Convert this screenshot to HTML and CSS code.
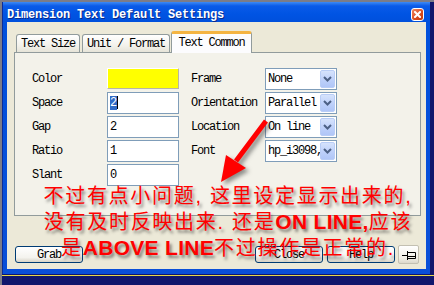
FILE: index.html
```html
<!DOCTYPE html>
<html lang="zh-CN">
<head>
<meta charset="UTF-8">
<title>Dimension Text Default Settings</title>
<link rel="stylesheet" href="styles.css">
</head>
<body>

<div class="desktop">
    <div class="window">
        <div class="titlebar">
            <span class="title">Dimension Text Default Settings</span>
            <span class="close-btn">
                <svg width="7" height="7" viewBox="0 0 7 7"><path d="M1 1L6 6M6 1L1 6" stroke="#fff" stroke-width="2" stroke-linecap="square"/></svg>
            </span>
        </div>
        <div class="client">
            <div class="tabs">
                <div class="tab tab-size">Text Size</div>
                <div class="tab tab-unit">Unit / Format</div>
                <div class="tab tab-active">Text Common</div>
            </div>
            <div class="panel">
                <div class="form-grid">
                    <span class="lbl">Color</span>
                    <span class="swatch"></span>
                    <span class="lbl">Frame</span>
                    <div class="combo"><span class="combo-text">None</span><span class="drop"><svg width="9" height="6" viewBox="0 0 9 6"><path d="M1 1L4.5 4.5L8 1" fill="none" stroke="#4d6185" stroke-width="2"/></svg></span></div>

                    <span class="lbl">Space</span>
                    <div class="field"><span class="sel">2</span><span class="caret"></span></div>
                    <span class="lbl">Orientation</span>
                    <div class="combo"><span class="combo-text">Parallel</span><span class="drop"><svg width="9" height="6" viewBox="0 0 9 6"><path d="M1 1L4.5 4.5L8 1" fill="none" stroke="#4d6185" stroke-width="2"/></svg></span></div>

                    <span class="lbl">Gap</span>
                    <div class="field">2</div>
                    <span class="lbl">Location</span>
                    <div class="combo"><span class="combo-text">On line</span><span class="drop"><svg width="9" height="6" viewBox="0 0 9 6"><path d="M1 1L4.5 4.5L8 1" fill="none" stroke="#4d6185" stroke-width="2"/></svg></span></div>

                    <span class="lbl">Ratio</span>
                    <div class="field">1</div>
                    <span class="lbl">Font</span>
                    <div class="combo"><span class="combo-text">hp_i3098,</span><span class="drop"><svg width="9" height="6" viewBox="0 0 9 6"><path d="M1 1L4.5 4.5L8 1" fill="none" stroke="#4d6185" stroke-width="2"/></svg></span></div>

                    <span class="lbl">Slant</span>
                    <div class="field">0</div>
                </div>
            </div>
            <div class="buttons">
                <button class="btn btn-grab">Grab</button>
                <span class="spacer"></span>
                <button class="btn">Close</button>
                <button class="btn">Help</button>
                <button class="pin">
                    <svg width="14" height="10" viewBox="0 0 14 10"><path d="M0 5.5H5M5.5 1V10M6 2.5H13.5V8.5H6M6 6.5H13" fill="none" stroke="#000" stroke-width="1"/></svg>
                </button>
            </div>
        </div>
    </div>
    <div class="yellow-line"></div>

    <svg class="arrow" width="60" height="75" viewBox="213 113 60 75">
        <path d="M266 121L236 161" stroke="#f00" stroke-width="5"/>
        <polygon points="221,182 226,155 246,168" fill="#f00"/>
    </svg>

    <div class="note">
        <div>不过有点小问题, 这里设定显示出来的,</div>
        <div>没有及时反映出来. 还是<b>ON LINE,</b>应该</div>
        <div>是<b>ABOVE LINE</b>不过操作是正常的.</div>
    </div>
</div>

</body>
</html>
```
FILE: styles.css
```css
body {
    margin: 0;
    background-color: #11166c;
}

.desktop {
    position: relative;
    width: 434px;
    height: 285px;
    box-sizing: border-box;
    overflow: hidden;
    background-color: #11166c;
    border-top: 2px solid #7c7c88;
    border-left: 2px solid #7c7c88;
    font-family: "Liberation Mono", monospace;
    font-size: 12px;
    letter-spacing: -1.2px;
    color: #000;
}

.window {
    width: 428px;
    height: 272px;
    box-sizing: border-box;
    display: flex;
    flex-direction: column;
    padding: 0 4px 5px 4px;
    border-left: 1px solid #0a2c9a;
    background: linear-gradient(#3d8af5 0, #0a5ae8 4px, #0054e3 12px, #0050dc 20px, #0a4fd8 100%);
}

.titlebar {
    height: 20px;
    box-sizing: border-box;
    padding-top: 5px;
    display: flex;
    align-items: center;
    justify-content: space-between;
}

.title {
    color: #fff;
    font-weight: bold;
    letter-spacing: -0.2px;
    text-shadow: 1px 1px #0a2a8a;
}

.close-btn {
    width: 13px;
    height: 13px;
    box-sizing: border-box;
    margin-right: 2px;
    display: flex;
    align-items: center;
    justify-content: center;
    border: 1px solid #fff;
    border-radius: 3px;
    background: linear-gradient(135deg, #f08a64, #d84a1e 60%, #c0380e);
}

.client {
    flex: 1;
    background-color: #ece9d8;
    padding: 9px 5px 0 7px;
}

.tabs {
    display: flex;
    align-items: flex-end;
    height: 22px;
    padding-left: 2px;
    margin-bottom: -1px;
    position: relative;
    z-index: 1;
}

.tab {
    height: 18px;
    box-sizing: border-box;
    margin-bottom: 1px;
    margin-right: 2px;
    display: flex;
    align-items: center;
    justify-content: center;
    border: 1px solid #919b9c;
    border-bottom: none;
    border-radius: 3px 3px 0 0;
    background: linear-gradient(#ffffff, #f3f2ec 60%, #e6e4d8);
}

.tab-size {
    width: 64px;
}

.tab-unit {
    width: 88px;
    margin-right: 1px;
}

.tab-active {
    width: 81px;
    height: 22px;
    margin-bottom: 0;
    padding-bottom: 2px;
    border-top: 3px solid #f4b442;
    background: #fcfcfe;
}

.panel {
    height: 164px;
    box-sizing: border-box;
    border: 1px solid #919b9c;
    background-color: #f3f2ea;
    padding: 15px 0 0 17px;
}

.form-grid {
    display: grid;
    grid-template-columns: 75px 84px 74px 72px;
    grid-auto-rows: 21px;
    row-gap: 3px;
    align-items: center;
}

.lbl {
    padding-top: 1px;
}

.swatch {
    width: 72px;
    height: 21px;
    box-sizing: border-box;
    background-color: #ffff00;
    border: 1px solid #b8b5a6;
    border-top-color: #fff;
    border-left-color: #fff;
}

.field {
    width: 72px;
    height: 22px;
    box-sizing: border-box;
    display: flex;
    align-items: center;
    padding-left: 2px;
    border: 1px solid #7f9db9;
    background-color: #fff;
}

.sel {
    background-color: #316ac5;
    color: #fff;
    padding-right: 1px;
}

.caret {
    width: 1px;
    height: 13px;
    background-color: #000;
}

.combo {
    width: 72px;
    height: 22px;
    box-sizing: border-box;
    display: flex;
    padding: 1px;
    border: 1px solid #7f9db9;
    background-color: #fff;
}

.combo-text {
    flex: 1;
    overflow: hidden;
    white-space: nowrap;
    padding-left: 1px;
    line-height: 19px;
}

.drop {
    width: 15px;
    box-sizing: border-box;
    display: flex;
    align-items: center;
    justify-content: center;
    border: 1px solid #b9cdf6;
    border-radius: 2px;
    background: linear-gradient(#d6e3fc, #bccffa 60%, #b0c6f7);
}

.buttons {
    display: flex;
    align-items: center;
    height: 19px;
    margin-top: 29px;
}

.btn {
    width: 68px;
    height: 17px;
    margin-right: 4px;
    padding: 0;
    font: inherit;
    letter-spacing: -1.2px;
    color: #000;
    border: 1px solid #003c74;
    border-radius: 3px;
    background: linear-gradient(#ffffff, #f4f3ee 70%, #d8d4c8);
}

.btn-grab {
    margin-left: 1px;
}

.spacer {
    flex: 1;
}

.pin {
    width: 21px;
    height: 19px;
    margin-left: -1px;
    margin-right: 2px;
    padding: 0;
    display: flex;
    align-items: center;
    justify-content: center;
    border: 1px solid #c3c0b2;
    border-radius: 2px;
    background: linear-gradient(#ffffff, #f1efe6 70%, #dcd8cc);
}

.yellow-line {
    height: 1px;
    margin-top: 1px;
    background-color: #e6d84a;
}

.arrow {
    position: absolute;
    left: 211px;
    top: 111px;
    filter: drop-shadow(3px 3px 2px rgba(40, 40, 40, 0.5));
}

.note {
    position: absolute;
    left: 18px;
    top: 181px;
    width: 416px;
    text-align: center;
    color: #ff0000;
    font-family: "Liberation Sans", "Noto Sans CJK SC", sans-serif;
    font-size: 20px;
    line-height: 26px;
    letter-spacing: 1.7px;
    text-shadow: 2px 3px 3px rgba(40, 40, 40, 0.55);
}

.note b {
    font-size: 21px;
    letter-spacing: 0.3px;
}
```
